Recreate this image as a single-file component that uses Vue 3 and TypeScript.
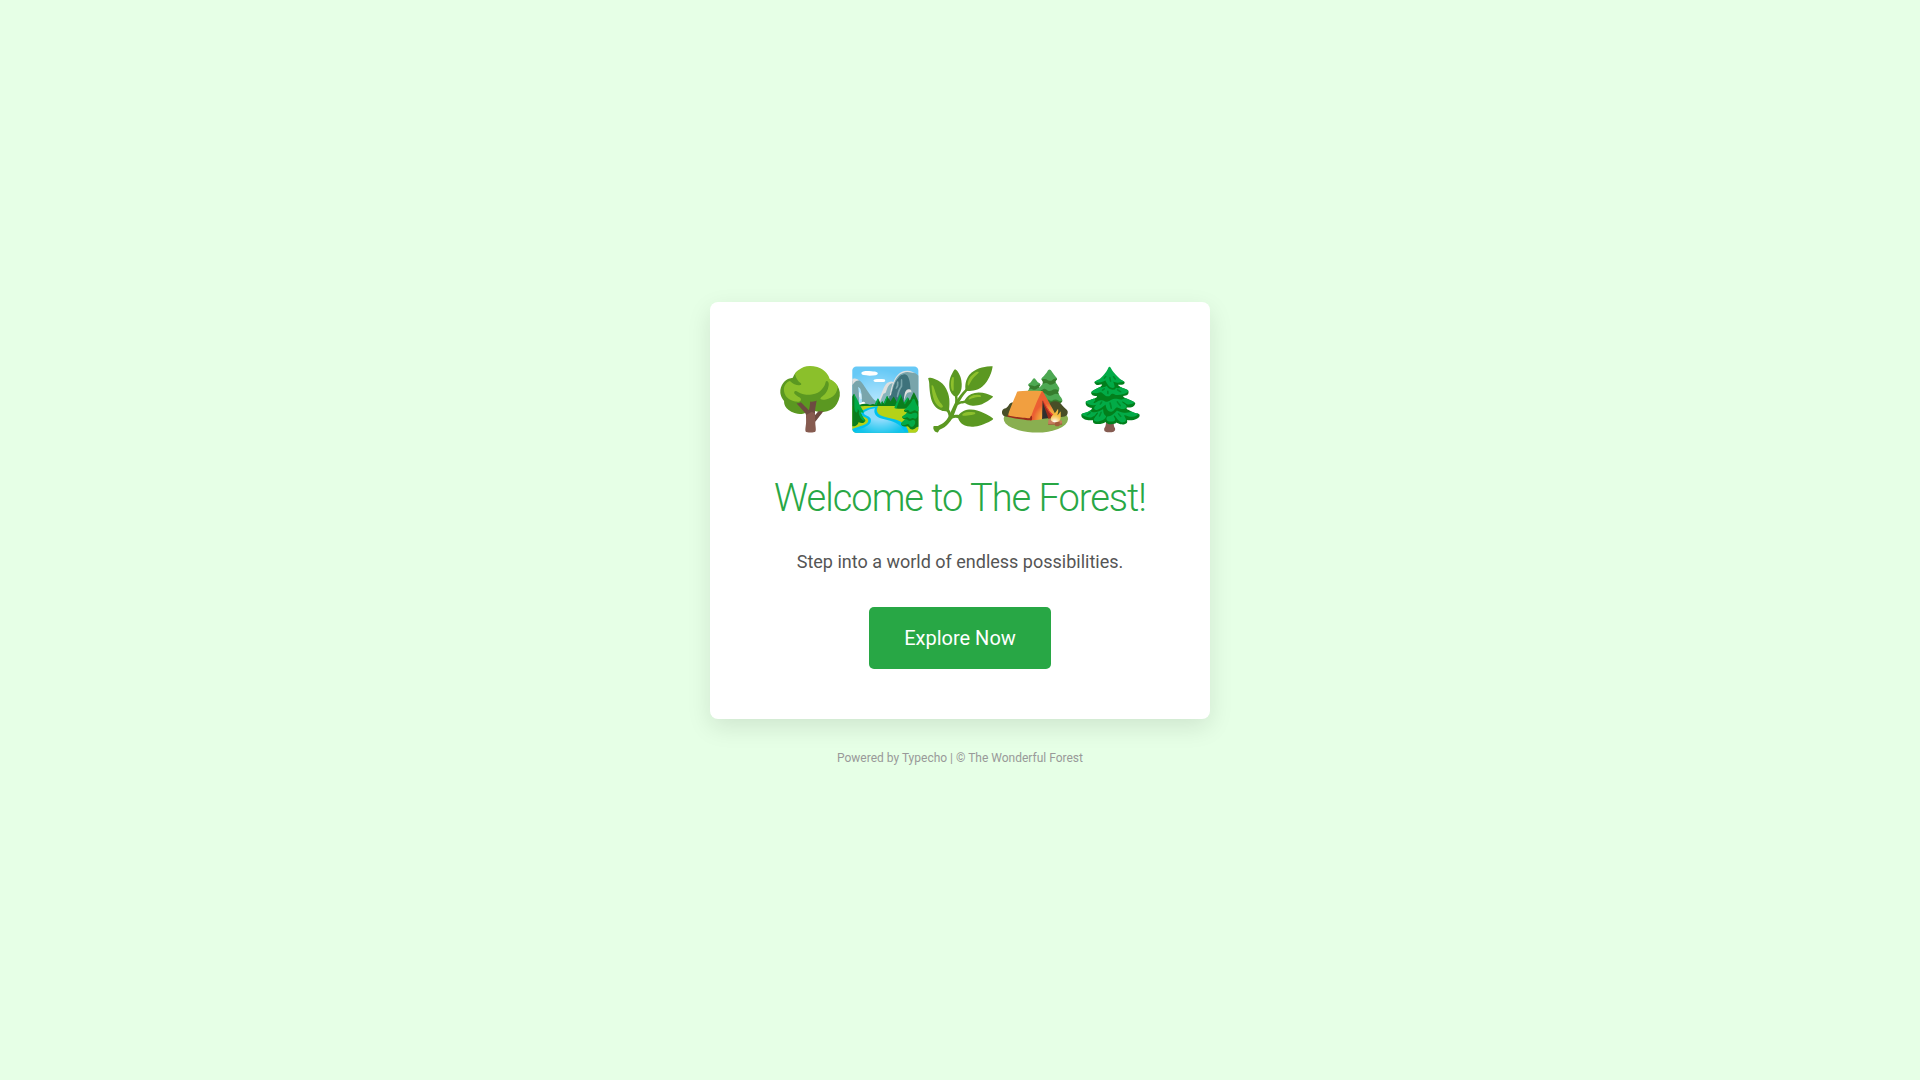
<script setup lang="ts">
const emojis = '🌳🏞️🌿🏕️🌲'
</script>

<template>
  <div class="page">
    <main class="card">
      <div class="emojis">{{ emojis }}</div>
      <h1>Welcome to The Forest!</h1>
      <p class="lead">Step into a world of endless possibilities.</p>
      <a class="button" href="#">Explore Now</a>
    </main>
    <footer>Powered by Typecho | © The Wonderful Forest</footer>
  </div>
</template>

<style>
body {
  margin: 0;
  background: #e6ffe6;
}
</style>

<style scoped>
.page {
  box-sizing: border-box;
  min-height: 100vh;
  display: flex;
  flex-direction: column;
  align-items: center;
  justify-content: center;
  font-family: Roboto, sans-serif;
  text-align: center;
}
.card {
  box-sizing: border-box;
  width: 100%;
  max-width: 500px;
  padding: 50px;
  background: #fff;
  border-radius: 8px;
  box-shadow: 0 8px 24px rgba(0, 0, 0, 0.1);
}
.emojis {
  font-size: 60px;
  line-height: 96px;
  margin-bottom: 20px;
}
h1 {
  margin: 0 0 20px;
  font-size: 38px;
  line-height: 60px;
  font-weight: 300;
  letter-spacing: -1px;
  color: #28a745;
}
.lead {
  margin: 0 0 31px;
  font-size: 18px;
  line-height: 28px;
  color: #555;
}
.button {
  display: inline-block;
  padding: 15px 35px;
  font-size: 20px;
  line-height: 32px;
  color: #fff;
  background: #28a745;
  border-radius: 5px;
  text-decoration: none;
}
footer {
  margin: 30px 0 12px;
  font-size: 12px;
  line-height: 18px;
  color: #999;
}
</style>
